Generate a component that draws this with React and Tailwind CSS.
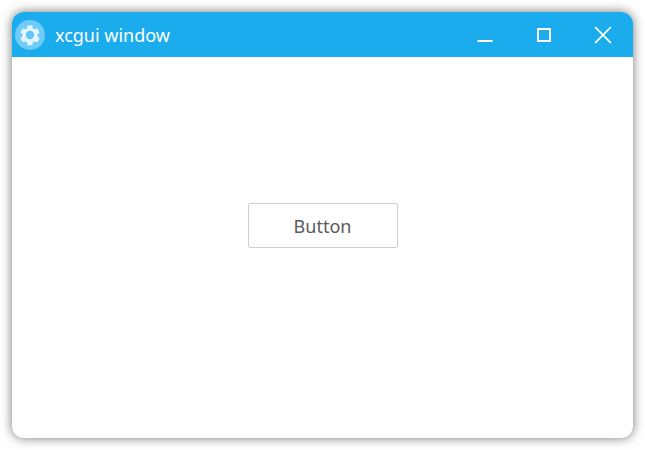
export default function App() {
  return (
    <div className="w-[645px] h-[450px] bg-white p-3 overflow-hidden" style={{ fontFamily: '"Noto Sans", sans-serif' }}>
      <div className="w-[621px] h-[426px] rounded-[12px] bg-white shadow-[0_0_11px_rgba(0,0,0,0.55)] overflow-hidden flex flex-col">
        <div className="h-[45px] shrink-0 bg-[#1aaced] flex items-center pl-[3px] text-white">
          <svg width="30" height="30" viewBox="0 0 30 30" className="shrink-0">
            <circle cx="15" cy="15" r="15" fill="#6fcbf8" />
            <path
              fill="#e3f6fe"
              d="M12.7 5.5h4.6l.6 2.9 1.6.9 2.8-.9 2.3 4-2.2 2v1.9l2.2 2-2.3 4-2.8-.9-1.6.9-.6 2.9h-4.6l-.6-2.9-1.6-.9-2.8.9-2.3-4 2.2-2v-1.9l-2.2-2 2.3-4 2.8.9 1.6-.9z"
            />
            <circle cx="15" cy="15" r="4.2" fill="#63c5f7" />
          </svg>
          <span className="ml-[10px] text-[18px] leading-none">xcgui window</span>
          <div className="ml-auto flex items-center text-white">
            <svg width="16" height="16" viewBox="0 0 16 16" className="mr-[44px] mt-[1px]">
              <rect x="0.5" y="13" width="15" height="2" fill="white" />
            </svg>
            <svg width="14" height="14" viewBox="0 0 14 14" className="mr-[43px]">
              <rect x="1" y="1" width="12" height="12" fill="none" stroke="white" strokeWidth="2" />
            </svg>
            <svg width="18" height="18" viewBox="0 0 18 18" className="mr-[21px]">
              <path d="M1.2 1.2L16.8 16.8M16.8 1.2L1.2 16.8" stroke="white" strokeWidth="1.7" fill="none" />
            </svg>
          </div>
        </div>
        <div className="flex-1 flex justify-center items-start pt-[146px]">
          <button className="w-[150px] h-[45px] bg-white border border-[#cfcfcf] rounded-[2px] text-[18px] leading-none text-[#5a5a5a]">
            Button
          </button>
        </div>
      </div>
    </div>
  );
}
